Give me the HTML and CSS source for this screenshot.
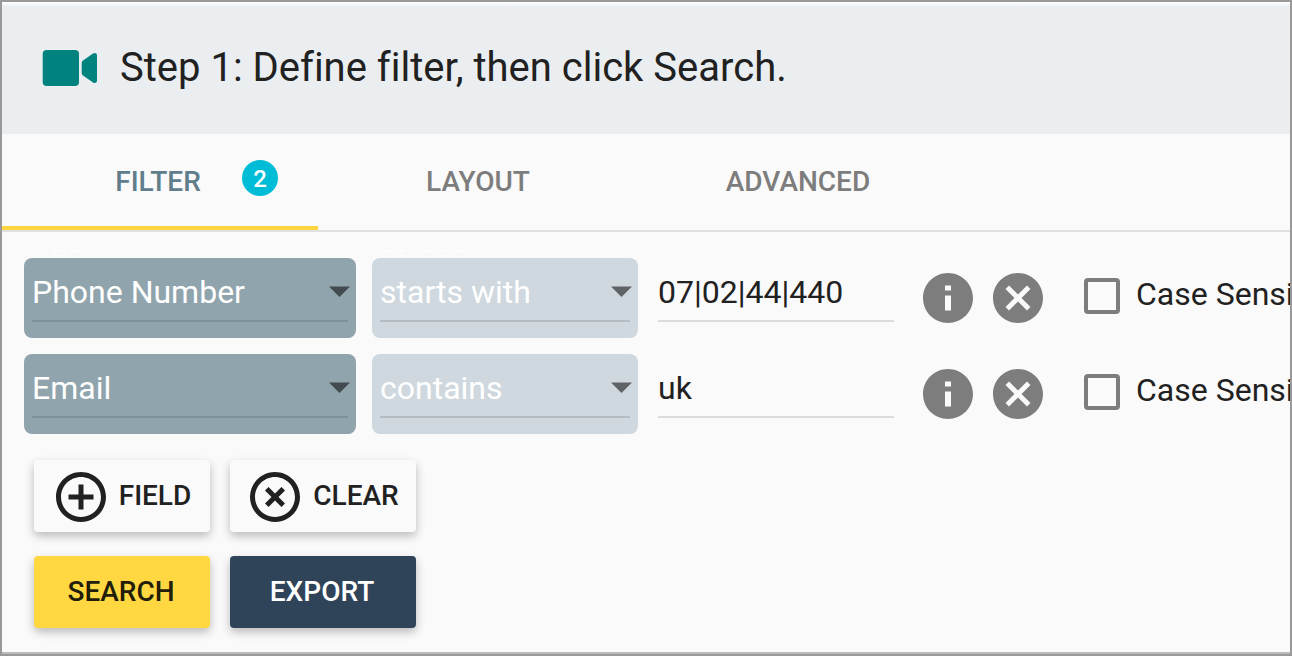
FILE: index.html
```html
<!DOCTYPE html>
<html lang="en">
<head>
<meta charset="utf-8">
<title>Search filter</title>
<link rel="stylesheet" href="styles.css">
</head>
<body>
<main class="frame">
  <header class="header">
    <svg class="header-icon" viewBox="0 0 56 36" aria-hidden="true"><rect x="0.700" width="36.300" height="36" rx="4"/><path d="M39.700 13Q39.700 11.300 41 10.400L51 3.600Q53 2.500 54.200 3.400Q55 4 55 5.500V30.500Q55 32 54.200 32.600Q53 33.500 51 32.400L41 25.600Q39.700 24.700 39.700 23Z"/></svg>
    <h1 class="title">Step 1: Define filter, then click Search.</h1>
  </header>

  <nav class="tabs" role="tablist">
    <button class="tab tab-active" role="tab" aria-selected="true">FILTER<span class="badge">2</span></button>
    <button class="tab" role="tab" aria-selected="false">LAYOUT</button>
    <button class="tab" role="tab" aria-selected="false">ADVANCED</button>
  </nav>

  <section class="filters">
    <div class="row">
      <div class="select select-field">
        <label class="float-label" for="field-1">Field</label>
        <select id="field-1"><option>Phone Number</option><option>Email</option></select>
        <svg class="arrow" viewBox="0 0 22 11" aria-hidden="true"><path d="M1 0.500H22L11.500 11Z"/></svg>
      </div>
      <div class="select select-condition">
        <label class="float-label" for="condition-1">Condition</label>
        <select id="condition-1"><option>starts with</option><option>contains</option></select>
        <svg class="arrow" viewBox="0 0 22 11" aria-hidden="true"><path d="M1 0.500H22L11.500 11Z"/></svg>
      </div>
      <input class="value" type="text" value="07|02|44|440" aria-label="Value">
      <div class="actions">
        <button class="icon-button" aria-label="Info"><svg class="icon" viewBox="0 0 24 24"><path d="M12 2C6.480 2 2 6.480 2 12s4.480 10 10 10 10-4.480 10-10S17.520 2 12 2zm1.200 15h-2.400v-6h2.400v6zm0-8h-2.400V7h2.400v2z"/></svg></button>
        <button class="icon-button" aria-label="Remove"><svg class="icon" viewBox="0 0 24 24"><path d="M12 2C6.470 2 2 6.470 2 12s4.470 10 10 10 10-4.470 10-10S17.530 2 12 2zm5 13.590L15.590 17 12 13.410 8.410 17 7 15.590 10.590 12 7 8.410 8.410 7 12 10.590 15.590 7 17 8.410 13.410 12 17 15.590z"/></svg></button>
      </div>
      <label class="case"><input class="checkbox" type="checkbox"><span class="case-text">Case Sensitive</span></label>
    </div>

    <div class="row">
      <div class="select select-field">
        <select aria-label="Field"><option>Email</option><option>Phone Number</option></select>
        <svg class="arrow" viewBox="0 0 22 11" aria-hidden="true"><path d="M1 0.500H22L11.500 11Z"/></svg>
      </div>
      <div class="select select-condition">
        <select aria-label="Condition"><option>contains</option><option>starts with</option></select>
        <svg class="arrow" viewBox="0 0 22 11" aria-hidden="true"><path d="M1 0.500H22L11.500 11Z"/></svg>
      </div>
      <input class="value" type="text" value="uk" aria-label="Value">
      <div class="actions">
        <button class="icon-button" aria-label="Info"><svg class="icon" viewBox="0 0 24 24"><path d="M12 2C6.480 2 2 6.480 2 12s4.480 10 10 10 10-4.480 10-10S17.520 2 12 2zm1.200 15h-2.400v-6h2.400v6zm0-8h-2.400V7h2.400v2z"/></svg></button>
        <button class="icon-button" aria-label="Remove"><svg class="icon" viewBox="0 0 24 24"><path d="M12 2C6.470 2 2 6.470 2 12s4.470 10 10 10 10-4.470 10-10S17.530 2 12 2zm5 13.590L15.590 17 12 13.410 8.410 17 7 15.590 10.590 12 7 8.410 8.410 7 12 10.590 15.590 7 17 8.410 13.410 12 17 15.590z"/></svg></button>
      </div>
      <label class="case"><input class="checkbox" type="checkbox"><span class="case-text">Case Sensitive</span></label>
    </div>
  </section>

  <div class="buttons">
    <button class="button"><svg class="icon" viewBox="0 0 24 24" aria-hidden="true"><path d="M13 7h-2v4H7v2h4v4h2v-4h4v-2h-4V7zm-1-5C6.480 2 2 6.480 2 12s4.480 10 10 10 10-4.480 10-10S17.520 2 12 2zm0 18c-4.410 0-8-3.590-8-8s3.590-8 8-8 8 3.590 8 8-3.590 8-8 8z"/></svg>FIELD</button>
    <button class="button"><svg class="icon" viewBox="0 0 24 24" aria-hidden="true"><path d="M14.590 8L12 10.590 9.410 8 8 9.410 10.590 12 8 14.590 9.410 16 12 13.410 14.590 16 16 14.590 13.410 12 16 9.410 14.590 8zM12 2C6.470 2 2 6.470 2 12s4.470 10 10 10 10-4.470 10-10S17.530 2 12 2zm0 18c-4.410 0-8-3.590-8-8s3.590-8 8-8 8 3.590 8 8-3.590 8-8 8z"/></svg>CLEAR</button>
    <button class="button button-search">SEARCH</button>
    <button class="button button-export">EXPORT</button>
  </div>
</main>
</body>
</html>
```
FILE: styles.css
```css
* {
  box-sizing: border-box;
}

body {
  margin: 0;
  background: #fafafa;
  color: #212121;
  font-family: Roboto, "Liberation Sans", sans-serif;
  font-size: 32px;
  font-variant-ligatures: none;
}

button,
input,
select {
  margin: 0;
  padding: 0;
  border: 0;
  background: none;
  color: inherit;
  font: inherit;
}

.frame {
  min-height: 100vh;
  border: 2px solid #999;
  box-shadow: inset 0 -2px #bbb;
  overflow: hidden;
}

.header {
  display: flex;
  align-items: center;
  gap: 22px;
  height: 132px;
  padding: 0 40px;
  background: linear-gradient(#fff, #eaeef1 5px);
}

.header-icon {
  flex: none;
  width: 56px;
  height: 36px;
  fill: #00837f;
}

.title {
  margin: 0;
  font-size: 40px;
  font-weight: 400;
  line-height: 48px;
  white-space: nowrap;
}

.tabs {
  display: flex;
  border-bottom: 2px solid #e0e0e0;
}

.tab {
  position: relative;
  width: 320px;
  height: 96px;
  padding-bottom: 2px;
  color: #7d7d7d;
  font-size: 28px;
  font-weight: 500;
}

.tab-active {
  width: 316px;
  padding-right: 4px;
  color: #607d8b;
  box-shadow: inset 0 -4px #fdd53f;
}

.badge {
  position: absolute;
  top: 26px;
  right: 40px;
  width: 36px;
  height: 36px;
  border-radius: 50%;
  background: #00bcd7;
  color: #fff;
  font-size: 24px;
  line-height: 38px;
}

.filters {
  display: flex;
  flex-direction: column;
  gap: 16px;
  margin-top: 18px;
  padding: 8px 0 16px 22px;
  overflow: hidden;
}

.row {
  display: flex;
  align-items: center;
  height: 80px;
}

.row > * {
  flex: none;
}

.select {
  position: relative;
  height: 80px;
  margin-right: 16px;
  padding: 0 8px;
  border-radius: 8px;
  color: #fff;
}

.select-field {
  width: 332px;
  background: #90a4ad;
}

.select-condition {
  width: 266px;
  margin-right: 20px;
  background: #cfd8de;
}

.select select,
.value {
  width: 100%;
  height: 64px;
  padding-top: 6px;
  border-bottom: 2px solid rgba(0, 0, 0, 0.12);
  border-radius: 0;
  appearance: none;
}

.select option {
  color: #212121;
}

.row .value {
  align-self: flex-start;
  width: 236px;
  margin-right: 24px;
}

.float-label {
  position: absolute;
  bottom: 100%;
  left: 6px;
  padding-bottom: 2px;
  font-size: 24px;
  line-height: 24px;
}

.arrow {
  position: absolute;
  top: 28px;
  right: 6px;
  width: 22px;
  height: 11px;
  fill: rgba(0, 0, 0, 0.54);
  pointer-events: none;
}

.actions {
  display: flex;
  gap: 10px;
  margin-right: 36px;
}

.icon-button {
  width: 60px;
  height: 60px;
  color: #7d7d7d;
}

.icon {
  display: block;
  flex: none;
  width: 60px;
  height: 60px;
  fill: currentColor;
}

.case {
  display: flex;
  align-items: center;
  gap: 16px;
  padding-bottom: 4px;
  white-space: nowrap;
}

.case-text {
  padding-bottom: 4px;
}

.checkbox {
  width: 36px;
  height: 36px;
  border: 4px solid #7d7d7d;
  border-radius: 4px;
  appearance: none;
}

.checkbox:checked {
  background: #7d7d7d;
}

.buttons {
  display: grid;
  grid-template-columns: 176px 186px;
  gap: 24px 20px;
  padding: 10px 32px 24px;
}

.button {
  display: flex;
  align-items: center;
  justify-content: center;
  gap: 8px;
  height: 72px;
  padding: 0 2px 2px 0;
  border-radius: 4px;
  background: #fafafa;
  box-shadow: 0 4px 10px rgba(0, 0, 0, 0.26);
  font-size: 28px;
  font-weight: 500;
}

.button .icon {
  margin-top: 4px;
}

.button-search {
  background: #ffd740;
  color: #221d08;
}

.button-export {
  background: #2f4459;
  color: #fff;
}
```
